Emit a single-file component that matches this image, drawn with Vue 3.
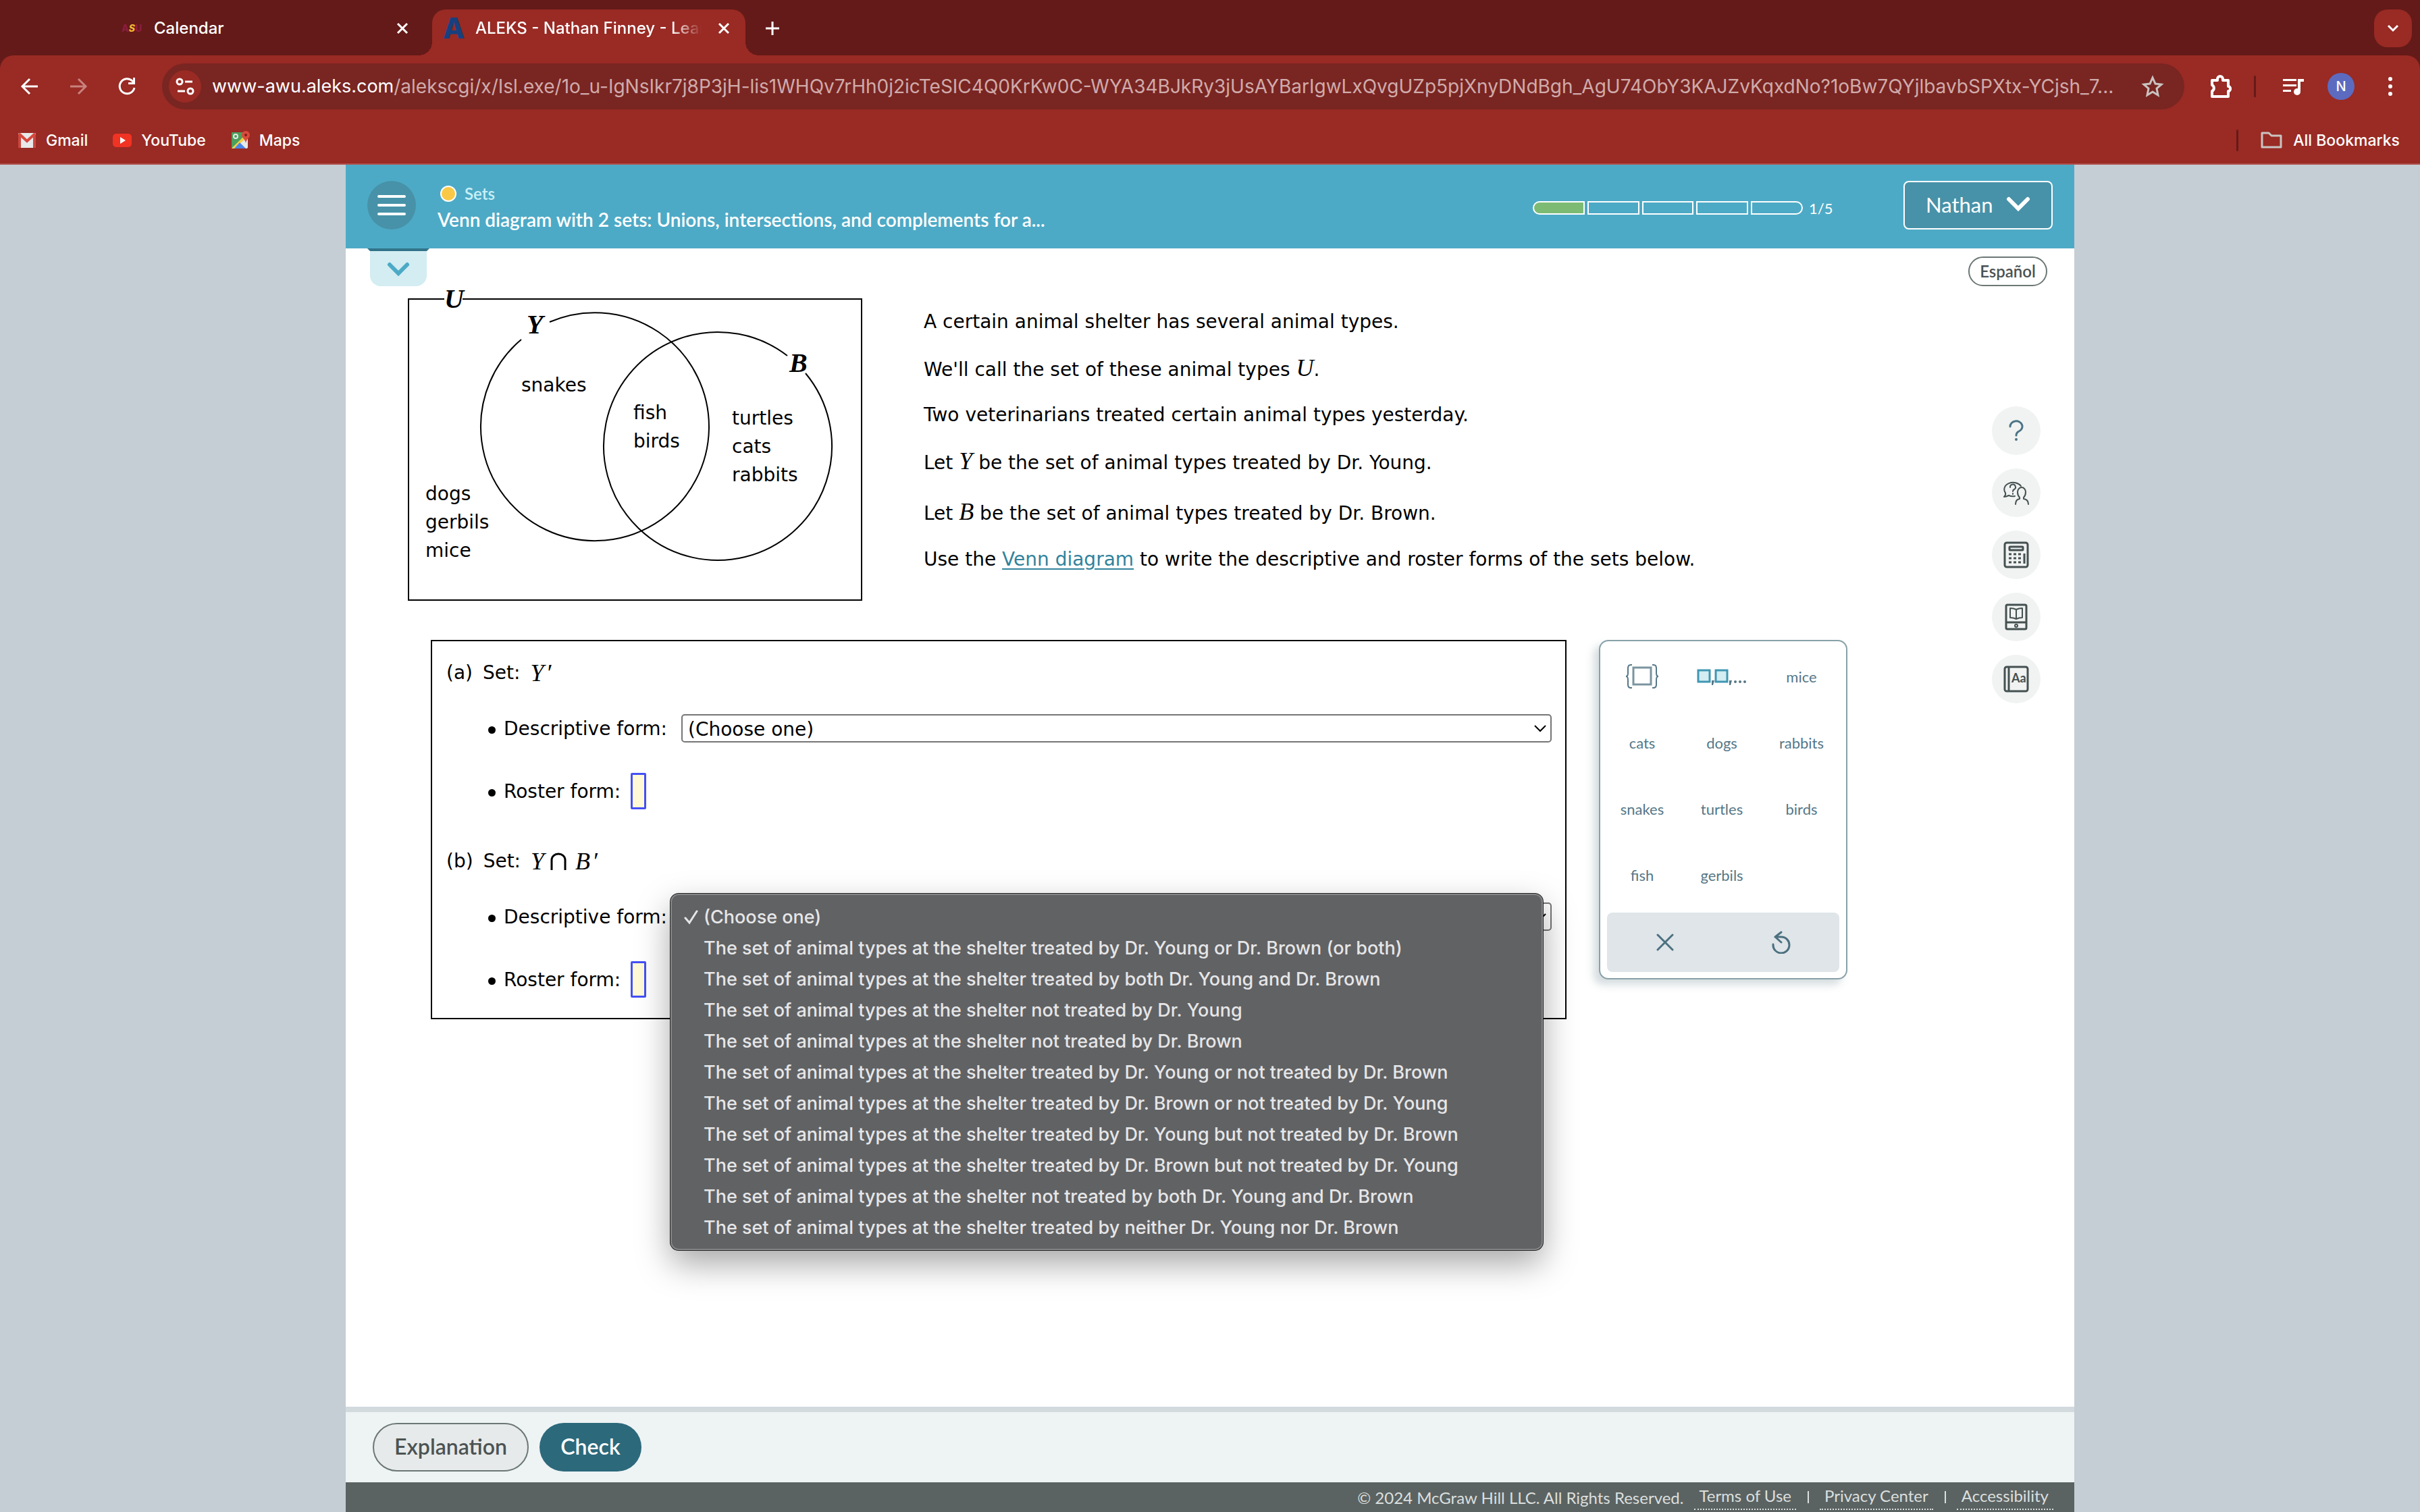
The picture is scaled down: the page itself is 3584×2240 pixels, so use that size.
<script setup>
import { ref } from 'vue'

const menuOptions = [
  '(Choose one)',
  'The set of animal types at the shelter treated by Dr. Young or Dr. Brown (or both)',
  'The set of animal types at the shelter treated by both Dr. Young and Dr. Brown',
  'The set of animal types at the shelter not treated by Dr. Young',
  'The set of animal types at the shelter not treated by Dr. Brown',
  'The set of animal types at the shelter treated by Dr. Young or not treated by Dr. Brown',
  'The set of animal types at the shelter treated by Dr. Brown or not treated by Dr. Young',
  'The set of animal types at the shelter treated by Dr. Young but not treated by Dr. Brown',
  'The set of animal types at the shelter treated by Dr. Brown but not treated by Dr. Young',
  'The set of animal types at the shelter not treated by both Dr. Young and Dr. Brown',
  'The set of animal types at the shelter treated by neither Dr. Young nor Dr. Brown',
]
const words = ['mice', 'cats', 'dogs', 'rabbits', 'snakes', 'turtles', 'birds', 'fish', 'gerbils']

const path = ref('/alekscgi/x/Isl.exe/1o_u-IgNsIkr7j8P3jH-lis1WHQv7rHh0j2icTeSIC4Q0KrKw0C-WYA34BJkRy3jUsAYBarIgwLxQvgUZp5pjXnyDNdBgh_AgU74ObY3KAJZvKqxdNo?1oBw7QYjlbavbSPXtx-YCjsh_7...')
const formA = ref(menuOptions[0])
const formB = ref(menuOptions[0])
const rosterA = ref('')
const rosterB = ref('')
</script>

<template>
  <div class="window">
    <header class="browser">
      <div class="tabs">
        <div class="tab">
          <span class="asu" aria-hidden="true">A<i>S</i>U</span>
          <span class="tab-title">Calendar</span>
          <button class="bare" aria-label="Close Calendar"><svg width="20" height="20" viewBox="0 0 20 20"><path d="M3 3l14 14M17 3L3 17" stroke="#fff" stroke-width="3" /></svg></button>
        </div>
        <div class="tab active">
          <span class="aleks" aria-hidden="true">A</span>
          <span class="tab-title fade">ALEKS - Nathan Finney - Learn</span>
          <button class="bare" aria-label="Close ALEKS"><svg width="20" height="20" viewBox="0 0 20 20"><path d="M3 3l14 14M17 3L3 17" stroke="#fff" stroke-width="3" /></svg></button>
        </div>
        <button class="bare plus" aria-label="New tab"><svg width="20" height="20" viewBox="0 0 20 20"><path d="M10 0v20M0 10h20" stroke="#fff" stroke-width="3" /></svg></button>
        <button class="tab-search" aria-label="Search tabs"><svg width="18" height="12" viewBox="0 0 18 12"><path d="M2 2l7 7 7-7" fill="none" stroke="#fff" stroke-width="3" /></svg></button>
      </div>

      <div class="toolbar">
        <button class="bare nav" aria-label="Back"><svg width="28" height="28" viewBox="0 0 28 28"><path d="M26 14H4M14 3L3 14l11 11" fill="none" stroke="#fff" stroke-width="3" /></svg></button>
        <button class="bare nav" aria-label="Forward"><svg width="28" height="28" viewBox="0 0 28 28"><path d="M2 14h22M14 3l11 11-11 11" fill="none" stroke="#c9827e" stroke-width="3" /></svg></button>
        <button class="bare nav" aria-label="Reload"><svg width="28" height="28" viewBox="0 0 28 28"><path d="M25 16a11 11 0 1 1-3-10l3 3" fill="none" stroke="#fff" stroke-width="3" /><path d="M26 1v10H16V8h7V1z" fill="#fff" /></svg></button>
        <div class="omnibox">
          <button class="site" aria-label="Site information"><svg width="28" height="28" viewBox="0 0 28 28"><g fill="none" stroke="#fff" stroke-width="3"><circle cx="6" cy="7" r="4" /><path d="M14 7h11M3 21h11" /><circle cx="22" cy="21" r="4" /></g></svg></button>
          <label class="domain" for="path">www-awu.aleks.com</label>
          <input id="path" v-model="path" class="path" type="text" />
          <button class="bare" aria-label="Bookmark this page"><svg width="34" height="34" viewBox="0 0 34 34"><path d="M17 4l4 9 9 1-7 6 2 10-8-5-8 5 2-10-7-6 9-1z" fill="none" stroke="#c9c3c0" stroke-width="3" /></svg></button>
        </div>
        <button class="bare ext" aria-label="Extensions"><svg width="36" height="36" viewBox="0 0 36 36"><path d="M5 9h8V7a4 4 0 0 1 8 0v2h8v9h1a4 4 0 0 1 0 7h-1v8H5v-8a5 5 0 0 0 0-9z" fill="none" stroke="#fff" stroke-width="4" stroke-linejoin="round" /></svg></button>
        <span class="divider"></span>
        <button class="bare media" aria-label="Media controls"><svg width="32" height="28" viewBox="0 0 32 28"><path d="M0 3h20v3H0zM0 11h20v3H0zM0 19h12v3H0zM22 3h9v4h-5v14h-4z" fill="#fff" /><circle cx="21" cy="22" r="5" fill="#fff" /></svg></button>
        <button class="avatar">N</button>
        <button class="bare dots" aria-label="Menu"><svg width="8" height="32" viewBox="0 0 8 32"><g fill="#fff"><circle cx="4" cy="5" r="3" /><circle cx="4" cy="16" r="3" /><circle cx="4" cy="27" r="3" /></g></svg></button>
      </div>

      <nav class="bookmarks">
        <a href="#gmail"><svg width="28" height="28" viewBox="0 0 28 28"><rect x="1" y="3" width="26" height="22" rx="2" fill="#e9e9e9" /><path d="M1 5v20h4V9zM27 5v20h-4V9z" fill="#c9483f" /><path d="M2 4l12 11L26 4" fill="none" stroke="#d8473d" stroke-width="4" /></svg>Gmail</a>
        <a href="#youtube"><svg width="28" height="28" viewBox="0 0 28 28"><rect y="4" width="28" height="20" rx="5" fill="#f03323" /><path d="M11 9l8 5-8 5z" fill="#fff" /></svg>YouTube</a>
        <a href="#maps"><svg width="28" height="28" viewBox="0 0 28 28"><rect x="1" y="2" width="24" height="24" rx="2" fill="#e8e8e8" /><path d="M1 2h17v8L1 26z" fill="#4c9f5c" /><path d="M1 26L18 9l3 3L5 26z" fill="#f5cf46" /><path d="M5 26l8-9 9 9z" fill="#4a86e8" /><circle cx="7" cy="8" r="3" fill="none" stroke="#e8e8e8" stroke-width="2" /><path d="M22 0a6 6 0 0 1 6 6c0 4-5 6-6 12-1-6-6-8-6-12a6 6 0 0 1 6-6z" fill="#da4a3d" /><circle cx="22" cy="6" r="2" fill="#7d2017" /></svg>Maps</a>
        <span class="divider push"></span>
        <a href="#all"><svg width="32" height="28" viewBox="0 0 32 28"><path d="M2 3h10l4 4h14v17H2z" fill="none" stroke="#c9c3c0" stroke-width="3" stroke-linejoin="round" /></svg>All Bookmarks</a>
      </nav>
    </header>

    <div class="page">
      <header class="lesson">
        <button class="burger" aria-label="Menu"><svg width="42" height="32" viewBox="0 0 42 32"><path d="M2 3h38M2 16h38M2 29h38" stroke="#fff" stroke-width="4" stroke-linecap="round" /></svg></button>
        <div class="titles">
          <div class="topic"><span class="dot"></span>Sets</div>
          <h1>Venn diagram with 2 sets: Unions, intersections, and complements for a...</h1>
        </div>
        <div class="progress"><span v-for="n in 5" :key="n" :class="{ done: n === 1 }"></span></div>
        <span class="count">1/5</span>
        <button class="user">Nathan<svg width="36" height="24" viewBox="0 0 36 24"><path d="M4 4l14 14L32 4" fill="none" stroke="#fff" stroke-width="6" stroke-linecap="round" /></svg></button>
      </header>

      <main class="content">
        <section class="work">
          <button class="collapse" aria-label="Show details">
            <svg width="92" height="56" viewBox="0 0 92 56"><path d="M4 4h84v36a16 16 0 0 1-16 16H20A16 16 0 0 1 4 40z" fill="#d3edf2" /><path d="M0 0h92l-4 4H4z" fill="#31748a" /><path d="M33 24l13 13 13-13" fill="none" stroke="#4daac6" stroke-width="6" stroke-linecap="round" /></svg>
          </button>

          <div class="question">
            <svg class="venn" width="676" height="468" viewBox="0 0 676 468" role="img" aria-label="Venn diagram of Y and B in U">
              <g fill="none" stroke="#000" stroke-width="2">
                <path d="M56 19H3v446h671V19H83" />
                <path d="M212 53A169 169 0 1 1 170 79" />
                <path d="M564 103A169 169 0 1 0 591 129" />
              </g>
              <g class="set-name">
                <text x="56" y="32">U</text>
                <text x="178" y="70">Y</text>
                <text x="567" y="127">B</text>
              </g>
              <g class="member">
                <text x="170" y="156">snakes</text>
                <text x="336" y="197">fish</text>
                <text x="336" y="239">birds</text>
                <text x="482" y="205">turtles</text>
                <text x="482" y="247">cats</text>
                <text x="482" y="289">rabbits</text>
                <text x="28" y="317">dogs</text>
                <text x="28" y="359">gerbils</text>
                <text x="28" y="401">mice</text>
              </g>
            </svg>
            <div class="prompt">
              <p>A certain animal shelter has several animal types.</p>
              <p class="math">We'll call the set of these animal types <i>U</i>.</p>
              <p>Two veterinarians treated certain animal types yesterday.</p>
              <p class="math">Let <i>Y</i> be the set of animal types treated by Dr. Young.</p>
              <p class="math tall">Let <i>B</i> be the set of animal types treated by Dr. Brown.</p>
              <p>Use the <a href="#venn">Venn diagram</a> to write the descriptive and roster forms of the sets below.</p>
            </div>
          </div>

          <div class="answer-row">
            <form class="answers" @submit.prevent>
              <div class="set-line"><span>(a)</span><span>Set:</span><i>Y<b>′</b></i></div>
              <ul>
                <li class="descriptive">
                  <label for="form-a">Descriptive form:</label>
                  <div class="picker">
                    <select id="form-a" v-model="formA"><option v-for="o in menuOptions" :key="o">{{ o }}</option></select>
                    <svg class="arrow" width="20" height="12" viewBox="0 0 20 12"><path d="M2 2l8 8 8-8" fill="none" stroke="#000" stroke-width="2" /></svg>
                  </div>
                </li>
                <li class="roster"><label for="roster-a">Roster form:</label><input id="roster-a" v-model="rosterA" type="text" /></li>
              </ul>
              <div class="set-line second"><span>(b)</span><span>Set:</span><i>Y<svg class="cap" width="24" height="26" viewBox="0 0 24 26"><path d="M2 26V11a10 9 0 0 1 20 0v15" fill="none" stroke="#000" stroke-width="3" /></svg>B<b>′</b></i></div>
              <ul>
                <li class="descriptive">
                  <label for="form-b">Descriptive form:</label>
                  <div class="picker">
                    <select id="form-b" v-model="formB"><option v-for="o in menuOptions" :key="o">{{ o }}</option></select>
                    <svg class="arrow" width="20" height="12" viewBox="0 0 20 12"><path d="M2 2l8 8 8-8" fill="none" stroke="#000" stroke-width="2" /></svg>
                    <ul class="menu" role="listbox" aria-label="Descriptive form">
                      <li v-for="(o, n) in menuOptions" :key="o" role="option" :aria-selected="n === 0">
                        <span class="tick"><svg v-if="n === 0" width="22" height="22" viewBox="0 0 22 22"><path d="M2 12l6 7L19 2" fill="none" stroke="#e6e6e7" stroke-width="3" stroke-linecap="round" /></svg></span>{{ o }}
                      </li>
                    </ul>
                  </div>
                </li>
                <li class="roster"><label for="roster-b">Roster form:</label><input id="roster-b" v-model="rosterB" type="text" /></li>
              </ul>
            </form>

            <aside class="keypad">
              <div class="keys">
                <button aria-label="Set braces"><svg width="50" height="38" viewBox="0 0 50 38"><path d="M10 2H8Q4 2 4 7v7q0 5-3 5 3 0 3 5v7q0 5 4 5h2M40 2h2q4 0 4 5v7q0 5 3 5-3 0-3 5v7q0 5-4 5h-2" fill="none" stroke="#557787" stroke-width="2" /><rect x="12" y="6" width="26" height="25" fill="#fff" stroke="#7b94a0" stroke-width="3" /></svg></button>
                <button aria-label="List"><svg width="74" height="26" viewBox="0 0 74 26"><g fill="#d3edf2" stroke="#4097b3" stroke-width="3"><rect x="2" y="4" width="17" height="17" /><rect x="28" y="4" width="17" height="17" /></g><g fill="#557787"><path d="M22 19h4l-2 7h-2zM48 19h4l-2 7h-2z" /><circle cx="57" cy="21" r="2" /><circle cx="64" cy="21" r="2" /><circle cx="71" cy="21" r="2" /></g></svg></button>
                <button v-for="w in words" :key="w">{{ w }}</button>
              </div>
              <div class="key-bar">
                <button aria-label="Clear"><svg width="26" height="26" viewBox="0 0 26 26"><path d="M2 2l22 22M24 2L2 24" stroke="#4c7080" stroke-width="3" stroke-linecap="round" /></svg></button>
                <button aria-label="Undo"><svg width="28" height="34" viewBox="0 0 28 34"><path d="M2 20a12 12 0 1 0 12-11H5M14 2L5 9l9 8" fill="none" stroke="#4c7080" stroke-width="3" stroke-linecap="round" stroke-linejoin="round" /></svg></button>
              </div>
            </aside>
          </div>
        </section>

        <aside class="side">
          <button class="lang">Español</button>
          <div class="tools">
            <button aria-label="Help"><svg width="22" height="32" viewBox="0 0 22 32"><path d="M2 10a9 8 0 1 1 13 7q-4 2-4 6" fill="none" stroke="#4c7485" stroke-width="3" stroke-linecap="round" /><circle cx="11" cy="29" r="2" fill="#4c7485" /></svg></button>
            <button aria-label="Ask an instructor"><svg width="40" height="40" viewBox="0 0 40 40"><g fill="none" stroke="#455050" stroke-width="2" stroke-linecap="round" stroke-linejoin="round"><path d="M18 25q-5 1-9-1-4 2-7 2 3-3 2-6A13 10 0 1 1 27 10" /><path d="M11 12a4 4 0 1 1 6 3q-2 1-2 3M15 21v1" /><path d="M25 27q-3-3-3-8a6 7 0 0 1 12 0q0 5-3 8v2q7 1 7 8M25 27v2q-6 1-6 8" /></g></svg></button>
            <button aria-label="Calculator"><svg width="40" height="40" viewBox="0 0 40 40"><g fill="none" stroke="#455050" stroke-width="3"><rect x="3" y="2" width="34" height="36" rx="3" /><rect x="10" y="8" width="20" height="5" rx="1" /></g><g stroke="#455050" stroke-width="3" stroke-dasharray="4 3"><path d="M9 19h19M9 25h19M9 31h19" /></g><path d="M32 18v15" stroke="#455050" stroke-width="3" /></svg></button>
            <button aria-label="eBook"><svg width="40" height="40" viewBox="0 0 40 40"><g fill="none" stroke="#455050" stroke-width="3" stroke-linejoin="round"><rect x="5" y="2" width="30" height="36" rx="2" /><path d="M5 28h30" /><path d="M20 9q-4-2-9-2v14q5 0 9 2 4-2 9-2V7q-5 0-9 2zv14" stroke-width="2" /><circle cx="20" cy="33" r="2" stroke-width="2" /></g></svg></button>
            <button aria-label="Dictionary"><svg width="40" height="40" viewBox="0 0 40 40"><g fill="none" stroke="#455050" stroke-width="3"><rect x="3" y="2" width="34" height="36" rx="3" /><path d="M9 2v36" /></g><text x="13" y="25" class="aa">Aa</text></svg></button>
          </div>
        </aside>
      </main>

      <div class="actions">
        <button class="explain">Explanation</button>
        <button class="check">Check</button>
      </div>
      <footer class="legal">
        <span>© 2024 McGraw Hill LLC. All Rights Reserved.</span>
        <a href="#terms">Terms of Use</a><span class="bar"></span>
        <a href="#privacy">Privacy Center</a><span class="bar"></span>
        <a href="#accessibility">Accessibility</a>
      </footer>
    </div>
  </div>
</template>

<style>
body {
  margin: 0;
  background: #c4ced4;
}
</style>

<style scoped>
* {
  box-sizing: border-box;
}
button,
input,
select {
  font: inherit;
  margin: 0;
}
svg {
  display: block;
  flex: none;
}
ul,
p,
h1 {
  margin: 0;
  padding: 0;
  list-style: none;
}
.window {
  min-height: 100vh;
  display: flex;
  flex-direction: column;
  font-family: Lato, 'Open Sans', sans-serif;
}
.bare {
  display: flex;
  padding: 0;
  border: 0;
  background: none;
}

/* Browser frame */
.browser {
  background: #641a18;
  color: #fff;
  font: 500 23px/32px Inter, 'Liberation Sans', sans-serif;
}
.tabs {
  display: flex;
  height: 82px;
  padding: 14px 12px 0 164px;
  font-size: 24px;
}
.tab {
  display: flex;
  align-items: center;
  width: 476px;
  height: 56px;
  padding: 0 34px 0 16px;
  gap: 16px;
}
.tab.active {
  position: relative;
  width: 464px;
  height: 68px;
  padding: 0 22px 12px 16px;
  border-radius: 20px 20px 0 0;
  background: #992a24;
}
.tab.active::before,
.tab.active::after {
  content: '';
  position: absolute;
  bottom: 0;
  left: -20px;
  width: 20px;
  height: 20px;
  background: radial-gradient(circle at 0 0, transparent 20px, #992a24 20px);
}
.tab.active::after {
  left: auto;
  right: -20px;
  background: radial-gradient(circle at 100% 0, transparent 20px, #992a24 20px);
}
.tab-title {
  flex: 1;
  overflow: hidden;
  white-space: nowrap;
}
.fade {
  mask-image: linear-gradient(to right, #000 85%, transparent 98%);
}
.asu {
  width: 32px;
  color: #8c1d40;
  font-size: 14px;
  font-weight: 800;
}
.asu i {
  color: #f2b632;
}
.aleks {
  width: 32px;
  color: #17407f;
  font: 800 42px/56px Inter, 'Liberation Sans', sans-serif;
}
.plus {
  align-items: center;
  height: 56px;
  margin-left: 30px;
}
.tab-search {
  display: flex;
  align-items: center;
  justify-content: center;
  width: 56px;
  height: 56px;
  margin-left: auto;
  border: 0;
  border-radius: 20px;
  background: #992a24;
}
.toolbar {
  display: flex;
  align-items: center;
  height: 92px;
  padding: 0 40px 0 30px;
  border-radius: 20px 20px 0 0;
  background: #992a24;
}
.nav {
  margin-right: 44px;
}
.omnibox {
  flex: 1;
  display: flex;
  align-items: center;
  height: 68px;
  min-width: 0;
  margin-left: -6px;
  padding: 0 30px 0 10px;
  border-radius: 34px;
  background: #792522;
  font-size: 27px;
  font-weight: 400;
}
.site {
  display: flex;
  align-items: center;
  justify-content: center;
  width: 48px;
  height: 48px;
  margin-right: 16px;
  padding: 0;
  border: 0;
  border-radius: 24px;
  background: #992a24;
}
.path {
  flex: 1;
  min-width: 0;
  padding: 0 20px 0 0;
  border: 0;
  background: none;
  color: #d0abaa;
  font-size: 28px;
}
.ext {
  margin-left: 36px;
}
.divider {
  width: 3px;
  height: 32px;
  margin: 0 40px 0 31px;
  border-radius: 2px;
  background: #641a18;
}
.media {
  margin-right: 34px;
}
.avatar {
  width: 40px;
  height: 40px;
  margin-right: 49px;
  padding: 0;
  border: 0;
  border-radius: 20px;
  background: #5c6bc0;
  color: #fff;
  font-size: 20px;
}
.bookmarks {
  display: flex;
  align-items: center;
  height: 70px;
  padding: 0 30px 0 26px;
  border-bottom: 2px solid #b0504d;
  background: #992a24;
}
.bookmarks a {
  display: flex;
  align-items: center;
  gap: 14px;
  margin-right: 37px;
  color: #fff;
  text-decoration: none;
}
.bookmarks a:last-child {
  gap: 16px;
  margin-right: 0;
}
.bookmarks .push {
  margin: 0 33px 0 auto;
}

/* Lesson page */
.page {
  flex: 1;
  display: flex;
  flex-direction: column;
  width: 100%;
  max-width: 2560px;
  margin: 0 auto;
  background: #fff;
}
.lesson {
  display: flex;
  align-items: center;
  height: 124px;
  padding: 0 32px;
  background: #4daac6;
  color: #fff;
}
.burger {
  display: flex;
  align-items: center;
  justify-content: center;
  width: 72px;
  height: 72px;
  margin-bottom: 4px;
  padding: 0;
  border: 0;
  border-radius: 36px;
  background: #4792a8;
}
.titles {
  margin-left: 32px;
}
.topic {
  display: flex;
  align-items: center;
  gap: 12px;
  padding-left: 4px;
  color: #c9f0f7;
  font: 600 24px/38px Lato, sans-serif;
}
.dot {
  width: 24px;
  height: 24px;
  border: 2px solid #fff;
  border-radius: 12px;
  background: #f9c846;
}
h1 {
  font: 600 28px/38px Lato, sans-serif;
}
.progress {
  display: flex;
  gap: 4px;
  width: 400px;
  height: 20px;
  margin: 4px 0 0 auto;
}
.progress span {
  flex: 1;
  border: 2px solid #fff;
}
.progress span:first-child {
  border-radius: 10px 0 0 10px;
}
.progress span:last-child {
  border-radius: 0 10px 10px 0;
}
.progress .done {
  background: #7dbb75;
}
.count {
  width: 140px;
  margin-top: 4px;
  padding-left: 9px;
  font-size: 22px;
}
.user {
  display: flex;
  align-items: center;
  justify-content: space-between;
  width: 221px;
  height: 72px;
  margin: 0 0 4px 9px;
  padding: 0 31px 2px;
  border: 2px solid #fff;
  border-radius: 8px;
  background: #4792a8;
  color: #fff;
  font-size: 31px;
}
.content {
  flex: 1;
  display: flex;
}
.work {
  flex: 1;
}
.collapse {
  display: block;
  margin-left: 32px;
  padding: 0;
  border: 0;
  background: none;
}
.question {
  display: flex;
  padding-left: 90px;
  color: #000;
  font: 28px/34px 'DejaVu Sans', Verdana, sans-serif;
}
.venn {
  overflow: visible;
}
.set-name {
  font: italic bold 40px 'Liberation Serif', serif;
}
.prompt {
  display: flex;
  flex-direction: column;
  gap: 34px;
  padding: 36px 0 0 90px;
}
.prompt i {
  font: italic 36px/34px 'Liberation Serif', serif;
}
.prompt .math {
  height: 36px;
}
.prompt .tall {
  height: 42px;
  padding-top: 5px;
}
.prompt a {
  color: #31839c;
  text-underline-offset: 4px;
}
.answer-row {
  display: flex;
  align-items: flex-start;
  gap: 48px;
  padding: 56px 179px 0 126px;
}
.answers {
  flex: 1;
  padding: 26px 20px 30px 21px;
  border: 2px solid #000;
  color: #000;
  font: 28px/42px 'DejaVu Sans', Verdana, sans-serif;
}
.set-line {
  display: flex;
  gap: 15px;
  height: 42px;
}
.set-line i {
  display: flex;
  align-items: center;
  font: italic 36px/42px 'Liberation Serif', serif;
}
.set-line b {
  margin-left: 3px;
  font-weight: 400;
}
.cap {
  margin: 0 13px 0 9px;
}
.second {
  margin-top: 56px;
}
.answers > ul > li {
  display: flex;
  align-items: center;
  margin-left: 62px;
}
.answers > ul > li::before {
  content: '';
  width: 11px;
  height: 11px;
  margin: 4px 12px 0 0;
  border-radius: 6px;
  background: #000;
}
.answers label {
  padding-top: 2px;
  line-height: 40px;
}
.descriptive {
  margin-top: 40px;
}
.roster {
  margin-top: 45px;
}
.roster input {
  width: 23px;
  height: 54px;
  margin-left: 15px;
  padding: 0;
  border: 3px solid #4450f5;
  border-radius: 2px;
  background: #fffad5;
}
.picker {
  position: relative;
  flex: 1;
  margin-left: 21px;
}
select {
  display: block;
  width: 100%;
  height: 42px;
  padding: 0 40px 0 8px;
  border: 2px solid #767676;
  border-radius: 5px;
  background: #fff;
  color: #000;
  appearance: none;
}
.arrow {
  position: absolute;
  top: 15px;
  right: 7px;
}
.menu {
  position: absolute;
  z-index: 2;
  top: -13px;
  left: -16px;
  right: 13px;
  padding: 10px 0 8px;
  border: 2px solid #858687;
  border-radius: 12px;
  background: #616264;
  box-shadow: 0 0 0 1px #222, 0 20px 50px rgba(0, 0, 0, 0.35);
  color: #e6e6e7;
  font: 500 27px/46px Inter, 'Liberation Sans', sans-serif;
}
.menu li {
  display: flex;
  align-items: center;
  padding-left: 18px;
  white-space: nowrap;
}
.tick {
  width: 29px;
}
.keypad {
  width: 368px;
  padding: 3px;
  border: 2px solid #88a1a8;
  border-radius: 14px;
  background: #fff;
  box-shadow: -8px 8px 12px rgba(90, 120, 130, 0.25);
}
.keys {
  display: grid;
  grid-template-columns: repeat(3, 118px);
  grid-auto-rows: 98px;
}
.keys button,
.key-bar button {
  display: flex;
  align-items: center;
  justify-content: center;
  padding: 0;
  border: 0;
  background: none;
  color: #557787;
  font-size: 22px;
}
.key-bar {
  display: flex;
  justify-content: space-around;
  height: 88px;
  margin: 7px 7px 6px;
  border-radius: 8px;
  background: #dfe5e8;
}
.side {
  display: flex;
  flex-direction: column;
  align-items: flex-end;
  gap: 178px;
  padding: 12px 40px 0 0;
}
.lang {
  width: 117px;
  height: 44px;
  padding: 0 0 2px;
  border: 2px solid #6b7774;
  border-radius: 22px;
  background: #fff;
  color: #4b5353;
  font-size: 24px;
  font-weight: 600;
}
.tools {
  display: flex;
  flex-direction: column;
  gap: 20px;
  margin-right: 10px;
}
.tools button {
  display: flex;
  align-items: center;
  justify-content: center;
  width: 72px;
  height: 72px;
  padding: 0;
  border: 0;
  border-radius: 36px;
  background: #f0f3f2;
}
.aa {
  fill: #455050;
  font: 700 18px Lato, sans-serif;
}
.actions {
  display: flex;
  gap: 16px;
  height: 112px;
  padding: 16px 40px;
  border-top: 8px solid #d3dade;
  background: #eef3f4;
}
.actions button {
  width: 231px;
  height: 72px;
  padding: 0 0 3px;
  border: 2px solid #6b7774;
  border-radius: 36px;
  background: #e7eaea;
  color: #4b5353;
  font-size: 32px;
  font-weight: 600;
}
.actions .check {
  width: 151px;
  border: 0;
  background: #2c697b;
  color: #fff;
}
.legal {
  display: flex;
  align-items: center;
  justify-content: flex-end;
  height: 44px;
  padding-right: 31px;
  background: #5b6362;
  color: #dbdfde;
  font-size: 24px;
}
.legal a {
  height: 38px;
  margin-left: 16px;
  padding: 0 7px;
  border-bottom: 2px dotted #dbdfde;
  color: inherit;
  line-height: 34px;
  text-decoration: none;
}
.legal .bar {
  width: 2px;
  height: 18px;
  margin-left: 17px;
  background: #dbdfde;
}
</style>
